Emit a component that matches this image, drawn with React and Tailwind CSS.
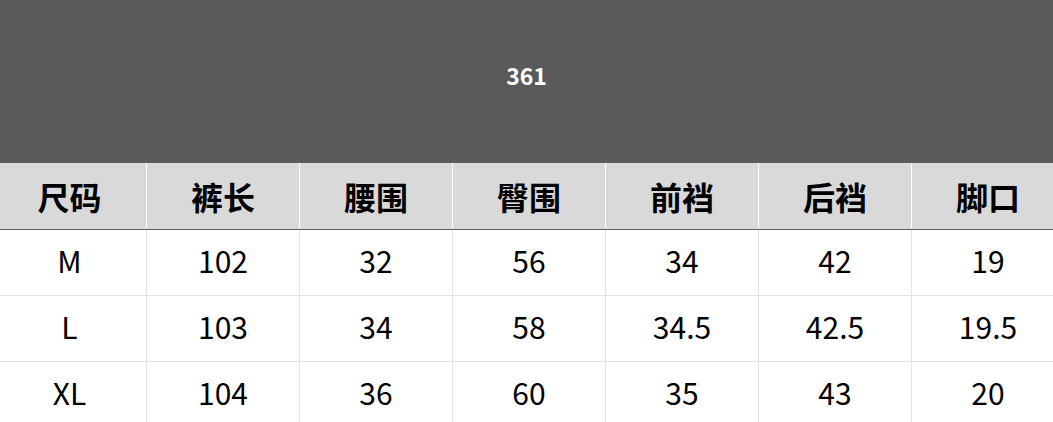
const HEAD = ['尺码', '裤长', '腰围', '臀围', '前裆', '后裆', '脚口']
const ROWS = [
  ['M', '102', '32', '56', '34', '42', '19'],
  ['L', '103', '34', '58', '34.5', '42.5', '19.5'],
  ['XL', '104', '36', '60', '35', '43', '20'],
]

export default function App() {
  return (
    <div className="w-[1053px] h-[422px] overflow-hidden bg-white" style={{ fontFamily: '"Noto Sans CJK SC", "Noto Sans", sans-serif' }}>
      <div className="h-[163px] bg-[#5a5a5a] flex items-center justify-center">
        <span className="text-white font-bold text-[23px] -mt-[12px]">361</span>
      </div>

      <div className="ml-[-7px] w-[1071px]">
        {/* header */}
        <div className="flex h-[67px] bg-[#d9d9d9] border-b border-[#5f5f5f]">
          {HEAD.map((h, i) => (
            <div key={h} className={`w-[153px] flex items-center justify-center text-[32px] font-bold text-black ${i ? 'border-l border-white' : ''}`}>
              {h}
            </div>
          ))}
        </div>

        {ROWS.map((r, ri) => (
          <div key={ri} className="flex h-[66px] border-b border-[#e3e3e3]">
            {r.map((c, i) => (
              <div key={i} className={`w-[153px] flex items-center justify-center text-[30px] text-black ${i ? 'border-l border-[#e3e3e3]' : ''}`}>
                <span className="-mt-[5px]">{c}</span>
              </div>
            ))}
          </div>
        ))}
      </div>
    </div>
  )
}
